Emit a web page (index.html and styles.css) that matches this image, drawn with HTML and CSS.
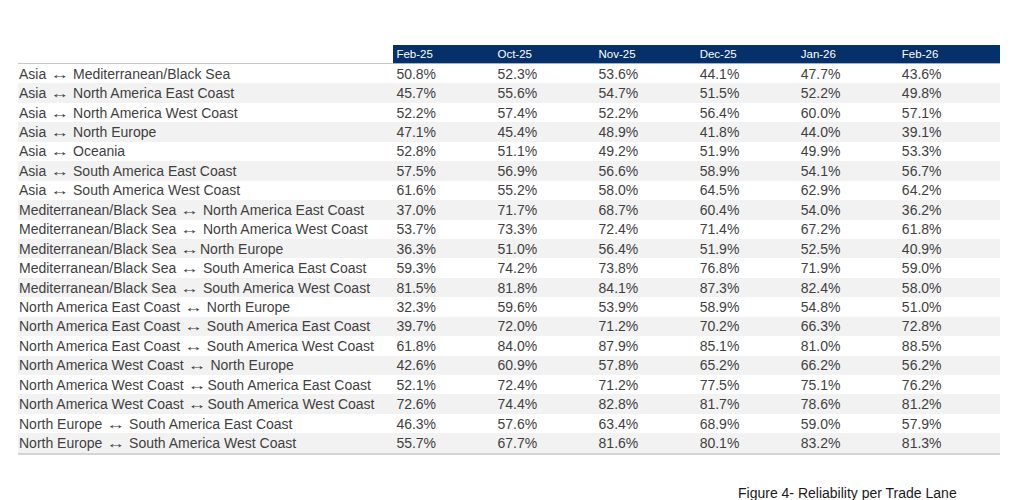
FILE: index.html
```html
<!DOCTYPE html>
<html>
<head>
<meta charset="utf-8">
<link rel="stylesheet" href="styles.css">
</head>
<body>
<div class="page">
<table class="lanes">
<colgroup><col class="c-lane"><col class="c-m"><col class="c-m"><col class="c-m"><col class="c-m"><col class="c-m"><col class="c-m"></colgroup>
<thead>
<tr><th class="blank"></th><th>Feb-25</th><th>Oct-25</th><th>Nov-25</th><th>Dec-25</th><th>Jan-26</th><th>Feb-26</th></tr>
</thead>
<tbody>
<tr><td>Asia <span class="arr">↔</span> Mediterranean/Black Sea</td><td>50.8%</td><td>52.3%</td><td>53.6%</td><td>44.1%</td><td>47.7%</td><td>43.6%</td></tr>
<tr><td>Asia <span class="arr">↔</span> North America East Coast</td><td>45.7%</td><td>55.6%</td><td>54.7%</td><td>51.5%</td><td>52.2%</td><td>49.8%</td></tr>
<tr><td>Asia <span class="arr">↔</span> North America West Coast</td><td>52.2%</td><td>57.4%</td><td>52.2%</td><td>56.4%</td><td>60.0%</td><td>57.1%</td></tr>
<tr><td>Asia <span class="arr">↔</span> North Europe</td><td>47.1%</td><td>45.4%</td><td>48.9%</td><td>41.8%</td><td>44.0%</td><td>39.1%</td></tr>
<tr><td>Asia <span class="arr">↔</span> Oceania</td><td>52.8%</td><td>51.1%</td><td>49.2%</td><td>51.9%</td><td>49.9%</td><td>53.3%</td></tr>
<tr><td>Asia <span class="arr">↔</span> South America East Coast</td><td>57.5%</td><td>56.9%</td><td>56.6%</td><td>58.9%</td><td>54.1%</td><td>56.7%</td></tr>
<tr><td>Asia <span class="arr">↔</span> South America West Coast</td><td>61.6%</td><td>55.2%</td><td>58.0%</td><td>64.5%</td><td>62.9%</td><td>64.2%</td></tr>
<tr><td>Mediterranean/Black Sea <span class="arr">↔</span> North America East Coast</td><td>37.0%</td><td>71.7%</td><td>68.7%</td><td>60.4%</td><td>54.0%</td><td>36.2%</td></tr>
<tr><td>Mediterranean/Black Sea <span class="arr">↔</span> North America West Coast</td><td>53.7%</td><td>73.3%</td><td>72.4%</td><td>71.4%</td><td>67.2%</td><td>61.8%</td></tr>
<tr><td>Mediterranean/Black Sea <span class="arr">↔</span><span class="snug"> </span>North Europe</td><td>36.3%</td><td>51.0%</td><td>56.4%</td><td>51.9%</td><td>52.5%</td><td>40.9%</td></tr>
<tr><td>Mediterranean/Black Sea <span class="arr">↔</span> South America East Coast</td><td>59.3%</td><td>74.2%</td><td>73.8%</td><td>76.8%</td><td>71.9%</td><td>59.0%</td></tr>
<tr><td>Mediterranean/Black Sea <span class="arr">↔</span> South America West Coast</td><td>81.5%</td><td>81.8%</td><td>84.1%</td><td>87.3%</td><td>82.4%</td><td>58.0%</td></tr>
<tr><td>North America East Coast <span class="arr">↔</span> North Europe</td><td>32.3%</td><td>59.6%</td><td>53.9%</td><td>58.9%</td><td>54.8%</td><td>51.0%</td></tr>
<tr><td>North America East Coast <span class="arr">↔</span> South America East Coast</td><td>39.7%</td><td>72.0%</td><td>71.2%</td><td>70.2%</td><td>66.3%</td><td>72.8%</td></tr>
<tr><td>North America East Coast <span class="arr">↔</span> South America West Coast</td><td>61.8%</td><td>84.0%</td><td>87.9%</td><td>85.1%</td><td>81.0%</td><td>88.5%</td></tr>
<tr><td>North America West Coast <span class="arr">↔</span> North Europe</td><td>42.6%</td><td>60.9%</td><td>57.8%</td><td>65.2%</td><td>66.2%</td><td>56.2%</td></tr>
<tr><td>North America West Coast <span class="arr">↔</span><span class="snug"> </span>South America East Coast</td><td>52.1%</td><td>72.4%</td><td>71.2%</td><td>77.5%</td><td>75.1%</td><td>76.2%</td></tr>
<tr><td>North America West Coast <span class="arr">↔</span><span class="snug"> </span>South America West Coast</td><td>72.6%</td><td>74.4%</td><td>82.8%</td><td>81.7%</td><td>78.6%</td><td>81.2%</td></tr>
<tr><td>North Europe <span class="arr">↔</span> South America East Coast</td><td>46.3%</td><td>57.6%</td><td>63.4%</td><td>68.9%</td><td>59.0%</td><td>57.9%</td></tr>
<tr><td>North Europe <span class="arr">↔</span> South America West Coast</td><td>55.7%</td><td>67.7%</td><td>81.6%</td><td>80.1%</td><td>83.2%</td><td>81.3%</td></tr>
</tbody>
</table>
<p class="caption">Figure 4- Reliability per Trade Lane</p>
</div>
</body>
</html>
```

FILE: styles.css
```css
html, body {
  margin: 0;
  padding: 0;
  background: #ffffff;
}
.page {
  width: 1017px;
  height: 500px;
  padding: 45px 0 0 18px;
  box-sizing: border-box;
  font-family: "Liberation Sans", Arial, sans-serif;
  color: #3f3f3f;
}
.lanes {
  border-collapse: collapse;
  table-layout: fixed;
  width: 982px;
}
.c-lane { width: 375px; }
.c-m { width: 101px; }
.lanes th {
  height: 18px;
  padding: 0 0 0 3px;
  background: #06306a;
  color: #ffffff;
  font-size: 11.5px;
  font-weight: normal;
  text-align: left;
  border-bottom: 1px solid #9fb0c8;
}
.lanes th.blank {
  background: #ffffff;
  border-bottom: 1px solid #c8c8c8;
}
.lanes td {
  height: 19.45px;
  padding: 0 0 0 3px;
  font-size: 14px;
  line-height: 16px;
  white-space: nowrap;
  text-align: left;
}
.lanes td:first-child {
  padding-left: 1px;
}
.arr {
  display: inline-block;
  font-size: 19px;
  line-height: 14px;
  transform: scaleY(0.74);
  transform-origin: 50% 13.6px;
}
.snug {
  word-spacing: -3px;
}
.lanes tbody tr:nth-child(even) td {
  background: #f2f2f2;
}
.lanes tbody tr:last-child td {
  border-bottom: 2px solid #d4d4d4;
}
.caption {
  margin: 30px 0 0 720px;
  font-size: 14px;
  color: #1a1a1a;
}
```
